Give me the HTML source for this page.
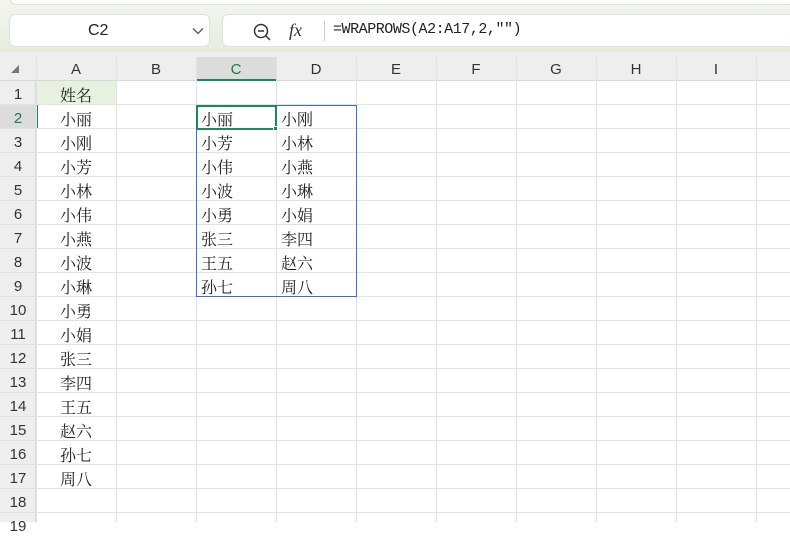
<!DOCTYPE html>
<html><head><meta charset="utf-8"><style>
*{margin:0;padding:0;box-sizing:border-box}
body{width:790px;height:522px;overflow:hidden;background:#fff;position:relative;font-family:"Liberation Sans","Noto Sans CJK SC",sans-serif}
.top{position:absolute;left:0;top:0;width:790px;height:52px;background:linear-gradient(#f3f6ef,#e6eddf)}
.topbar{position:absolute;left:10px;top:-6px;width:790px;height:11px;background:#fff;border-radius:6px;border:1px solid #dde3d7}
.nb{position:absolute;left:9px;top:14px;width:201px;height:33px;background:#fff;border-radius:6px;border:1px solid #dfe3db;font-size:16px;color:#222}
.fb{position:absolute;left:222px;top:14px;width:580px;height:33px;background:#fff;border-radius:6px;border:1px solid #dfe3db}
.hdr{position:absolute;left:0;top:52px;width:790px;height:29px;background:#eeeeee;border-bottom:1px solid #d8d8d8}
.rh{position:absolute;left:0;top:81px;width:36px;height:441px;background:#eeeeee;border-right:1px solid #d8d8d8}
.vl{position:absolute;top:57px;width:1px;height:465px;background:#e2e2e2}
.hl{position:absolute;left:0;width:790px;height:1px;background:#e2e2e2}
.ch{position:absolute;top:58px;width:80px;height:24px;line-height:24px;text-align:center;font-size:15px;color:#333}
.rn{position:absolute;left:0;width:36px;height:24px;line-height:28px;text-align:center;font-size:15px;color:#333}
.c{position:absolute;height:24px;line-height:28px;font-family:"Noto Serif CJK SC","Liberation Serif",serif;font-size:16px;color:#222}
.a{left:36px;width:80px;text-align:center}
.cc{left:201px}.dd{left:281px}
</style></head><body>
<div class="top"></div>
<div class="topbar"></div>
<div class="nb"><span style="position:absolute;left:78px;top:7px">C2</span>
<svg style="position:absolute;left:182px;top:12px" width="12" height="8"><path d="M1 1.5L6 6.5L11 1.5" stroke="#555" stroke-width="1.3" fill="none"/></svg></div>
<div class="fb">
<svg style="position:absolute;left:29px;top:7px" width="20" height="20"><circle cx="9" cy="9" r="6.5" stroke="#333" stroke-width="1.5" fill="none"/><path d="M6 9h6M14 14l4 4" stroke="#333" stroke-width="1.5"/></svg>
<span style="position:absolute;left:66px;top:5px;font-family:'Liberation Serif',serif;font-style:italic;font-size:18px;color:#333">fx</span>
<div style="position:absolute;left:101px;top:6px;width:1px;height:20px;background:#ccc"></div>
<span style="position:absolute;left:110px;top:6px;font-family:'Liberation Mono','Noto Serif CJK SC',monospace;font-size:15px;color:#222;letter-spacing:-0.45px">=WRAPROWS(A2:A17,2,″″)</span>
</div>
<div class="hdr"></div>
<div class="rh"></div>
<div style="position:absolute;left:196px;top:57px;width:80px;height:24px;background:#dcdcdc"></div>
<div style="position:absolute;left:196px;top:79px;width:80px;height:2px;background:#1a8a5a"></div>
<div style="position:absolute;left:0;top:105px;width:36px;height:24px;background:#dcdcdc"></div>
<div style="position:absolute;left:36px;top:81px;width:80px;height:24px;background:#e6f1de"></div>
<div style="position:absolute;left:36px;top:105px;width:2px;height:24px;background:#1a8a5a"></div>
<div class="vl" style="left:36px"></div><div class="vl" style="left:116px"></div><div class="vl" style="left:196px"></div><div class="vl" style="left:276px"></div><div class="vl" style="left:356px"></div><div class="vl" style="left:436px"></div><div class="vl" style="left:516px"></div><div class="vl" style="left:596px"></div><div class="vl" style="left:676px"></div><div class="vl" style="left:756px"></div>
<div class="hl" style="top:104px"></div><div class="hl" style="top:128px"></div><div class="hl" style="top:152px"></div><div class="hl" style="top:176px"></div><div class="hl" style="top:200px"></div><div class="hl" style="top:224px"></div><div class="hl" style="top:248px"></div><div class="hl" style="top:272px"></div><div class="hl" style="top:296px"></div><div class="hl" style="top:320px"></div><div class="hl" style="top:344px"></div><div class="hl" style="top:368px"></div><div class="hl" style="top:392px"></div><div class="hl" style="top:416px"></div><div class="hl" style="top:440px"></div><div class="hl" style="top:464px"></div><div class="hl" style="top:488px"></div><div class="hl" style="top:512px"></div>
<svg style="position:absolute;left:10px;top:64px" width="10" height="10"><path d="M9 1V9H1Z" fill="#777"/></svg>
<div class="ch" style="left:36px">A</div><div class="ch" style="left:116px">B</div><div class="ch" style="left:196px;color:#1a7a50">C</div><div class="ch" style="left:276px">D</div><div class="ch" style="left:356px">E</div><div class="ch" style="left:436px">F</div><div class="ch" style="left:516px">G</div><div class="ch" style="left:596px">H</div><div class="ch" style="left:676px">I</div>
<div class="rn" style="top:81px">1</div><div class="rn" style="top:105px;color:#1a7a50">2</div><div class="rn" style="top:129px">3</div><div class="rn" style="top:153px">4</div><div class="rn" style="top:177px">5</div><div class="rn" style="top:201px">6</div><div class="rn" style="top:225px">7</div><div class="rn" style="top:249px">8</div><div class="rn" style="top:273px">9</div><div class="rn" style="top:297px">10</div><div class="rn" style="top:321px">11</div><div class="rn" style="top:345px">12</div><div class="rn" style="top:369px">13</div><div class="rn" style="top:393px">14</div><div class="rn" style="top:417px">15</div><div class="rn" style="top:441px">16</div><div class="rn" style="top:465px">17</div><div class="rn" style="top:489px">18</div><div class="rn" style="top:513px">19</div>
<div class="c a" style="top:81px">姓名</div><div class="c a" style="top:105px">小丽</div><div class="c a" style="top:129px">小刚</div><div class="c a" style="top:153px">小芳</div><div class="c a" style="top:177px">小林</div><div class="c a" style="top:201px">小伟</div><div class="c a" style="top:225px">小燕</div><div class="c a" style="top:249px">小波</div><div class="c a" style="top:273px">小琳</div><div class="c a" style="top:297px">小勇</div><div class="c a" style="top:321px">小娟</div><div class="c a" style="top:345px">张三</div><div class="c a" style="top:369px">李四</div><div class="c a" style="top:393px">王五</div><div class="c a" style="top:417px">赵六</div><div class="c a" style="top:441px">孙七</div><div class="c a" style="top:465px">周八</div>
<div style="position:absolute;left:196px;top:105px;width:161px;height:192px;border:1px solid #3a6fd0"></div>
<div style="position:absolute;left:196px;top:105px;width:81px;height:25px;border:2px solid #1a8a5a"></div>
<div style="position:absolute;left:273px;top:126px;width:5px;height:5px;background:#1a8a5a;border:1px solid #fff"></div>
<div class="c cc" style="top:105px">小丽</div><div class="c dd" style="top:105px">小刚</div>
<div class="c cc" style="top:129px">小芳</div><div class="c dd" style="top:129px">小林</div>
<div class="c cc" style="top:153px">小伟</div><div class="c dd" style="top:153px">小燕</div>
<div class="c cc" style="top:177px">小波</div><div class="c dd" style="top:177px">小琳</div>
<div class="c cc" style="top:201px">小勇</div><div class="c dd" style="top:201px">小娟</div>
<div class="c cc" style="top:225px">张三</div><div class="c dd" style="top:225px">李四</div>
<div class="c cc" style="top:249px">王五</div><div class="c dd" style="top:249px">赵六</div>
<div class="c cc" style="top:273px">孙七</div><div class="c dd" style="top:273px">周八</div>
</body></html>
